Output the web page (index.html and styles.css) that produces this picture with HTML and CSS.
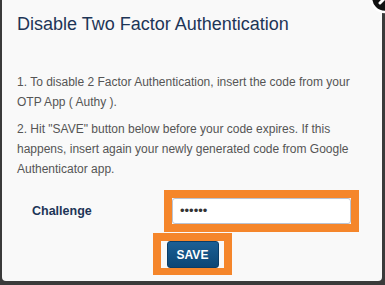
FILE: index.html
```html
<!DOCTYPE html>
<html>
<head>
<meta charset="utf-8">
<link rel="stylesheet" href="styles.css">
</head>
<body>
<div class="modal">
  <div class="close">
    <svg width="32" height="32" viewBox="0 0 32 32"><circle cx="16" cy="16" r="14" fill="#111" stroke="#fff" stroke-width="2.5"/><path d="M11 11 L21 21 M21 11 L11 21" stroke="#fff" stroke-width="3" stroke-linecap="round"/></svg>
  </div>
  <div class="header">
    <h4 class="title">Disable Two Factor Authentication</h4>
  </div>
  <div class="body">
    <p class="text">1. To disable 2 Factor Authentication, insert the code from your OTP App ( Authy ).</p>
    <p class="text">2. Hit "SAVE" button below before your code expires. If this happens, insert again your newly generated code from Google Authenticator app.</p>
    <div class="row">
      <label class="label">Challenge</label>
      <div class="hl hl-input"><div class="input">••••••</div></div>
    </div>
    <div class="actions">
      <div class="hl hl-btn"><button class="btn">SAVE</button></div>
    </div>
  </div>
</div>
</body>
</html>
```
FILE: styles.css
```css
html, body { margin: 0; padding: 0; }
body {
  width: 385px; height: 285px; overflow: hidden;
  background: #3a3a3a;
  font-family: Arial, "Liberation Sans", sans-serif;
}
.modal {
  position: relative;
  margin: 0 3px 0 2px;
  height: 281px;
  background: #f9f9f9;
  border-radius: 0 0 4px 4px;
}
.close {
  position: absolute;
  top: -18px; right: -19px;
  width: 32px; height: 32px;
}
.header { padding: 14px 15px 0 15px; }
.title {
  margin: 0;
  font-size: 18px; line-height: 20px; font-weight: normal;
  color: #1d3557;
}
.body { padding: 38px 15px 0 15px; }
.text {
  margin: 0 0 7px 0;
  font-size: 12px; line-height: 20px;
  color: #555;
}
.row {
  display: flex; align-items: center;
  margin-top: 11px;
}
.label {
  width: 147px; padding-left: 15px; box-sizing: border-box;
  font-size: 12.5px; font-weight: bold; color: #1d3557;
}
.hl { border: 8px solid #f5862b; }
.hl-input { width: 179px; }
.input {
  height: 26px; box-sizing: border-box;
  border: 1px solid #b9c3d3; border-radius: 3px;
  background: #fff;
  padding: 0 7px; font-size: 13px; line-height: 24px; color: #333;
}
.actions { display: flex; justify-content: center; margin-top: 1px; }
.hl-btn { padding: 0 5px 0 6px; border-width: 8px 8px 7px 8px; }
.btn {
  display: block;
  width: 52px; height: 27px;
  border: 1px solid #0b3c66; border-radius: 3px;
  background: linear-gradient(#1b5f95, #0c4675);
  color: #fff; font-family: Arial, "Liberation Sans", sans-serif;
  font-size: 12px; font-weight: bold; padding: 0;
}
```
